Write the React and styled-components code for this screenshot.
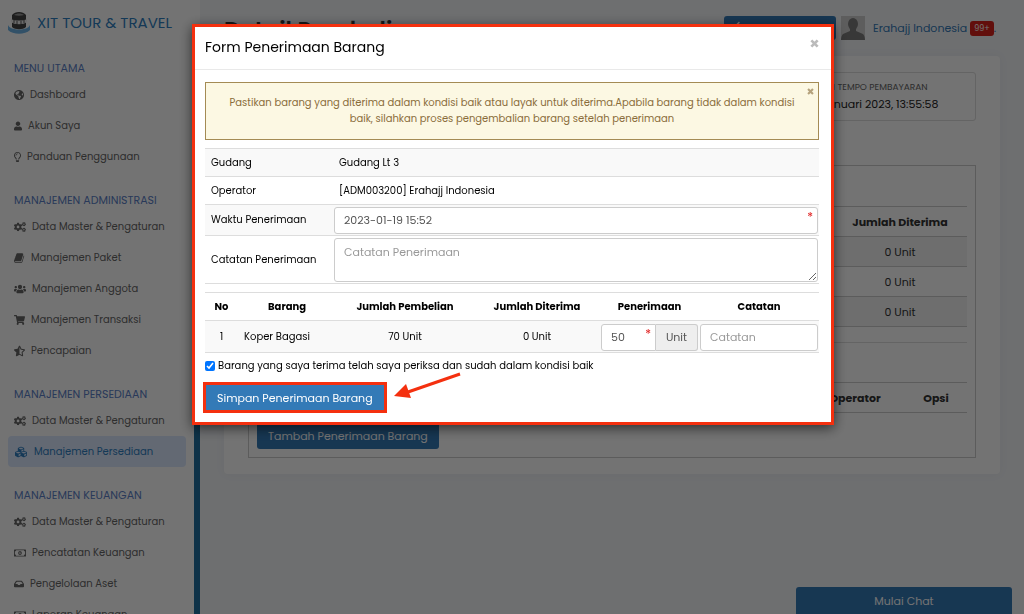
import React, { useState } from "react";
import styled, { createGlobalStyle } from "styled-components";
import {
  FaGlobeAmericas,
  FaUser,
  FaRegLightbulb,
  FaCogs,
  FaUsers,
  FaShoppingCart,
  FaStarHalfAlt,
  FaCubes,
  FaRegMoneyBillAlt,
  FaInbox,
  FaArrowLeft,
} from "react-icons/fa";

function BookIcon() {
  return (
    <svg viewBox="0 0 1792 1792" fill="currentColor" aria-hidden="true">
      <path d="M1639 478q40 57 18 129l-275 906q-19 64-76.5 107.5t-122.5 43.5h-923q-77 0-148.5-53.5t-99.5-131.5q-24-67-2-127 0-4 3-27t4-37q1-8-3-21.5t-3-19.5q2-11 8-21t16.5-23.5 16.5-23.5q23-38 45-91.5t30-91.5q3-10 .5-30t-.5-28q3-11 17-28t17-23q21-36 42-92t25-90q1-9-2.5-32t.5-28q4-13 22-30.5t22-22.5q19-26 42.5-84.5t27.5-96.5q1-8-3-25.5t-2-26.5q2-8 9-18t18-23 17-21q8-12 16.5-30.5t15-35 16-36 19.5-32 26.5-23.5 36-11.5 47.5 5.5l-1 3q38-9 51-9h761q74 0 114 56t18 130l-274 906q-36 119-71.5 153.5t-128.5 34.5h-869q-27 0-38 15-11 16-1 43 24 70 144 70h923q29 0 56-15.5t35-41.5l300-987q7-22 5-57 38 15 59 43z" />
    </svg>
  );
}

function CloseIcon({ size }) {
  return (
    <svg width={size} height={size} viewBox="0 0 10 10" aria-hidden="true">
      <path d="M1.5 1.5l7 7M8.5 1.5l-7 7" stroke="currentColor" strokeWidth="3" />
    </svg>
  );
}

const menu = [
  {
    title: "MENU UTAMA",
    items: [
      { label: "Dashboard", icon: FaGlobeAmericas, width: 10 },
      { label: "Akun Saya", icon: FaUser, width: 8 },
      { label: "Panduan Penggunaan", icon: FaRegLightbulb, width: 7 },
    ],
  },
  {
    title: "MANAJEMEN ADMINISTRASI",
    items: [
      { label: "Data Master & Pengaturan", icon: FaCogs, width: 12 },
      { label: "Manajemen Paket", icon: BookIcon, width: 11 },
      { label: "Manajemen Anggota", icon: FaUsers, width: 12 },
      { label: "Manajemen Transaksi", icon: FaShoppingCart, width: 11 },
      { label: "Pencapaian", icon: FaStarHalfAlt, width: 11 },
    ],
  },
  {
    title: "MANAJEMEN PERSEDIAAN",
    items: [
      { label: "Data Master & Pengaturan", icon: FaCogs, width: 12 },
      { label: "Manajemen Persediaan", icon: FaCubes, width: 14, active: true },
    ],
  },
  {
    title: "MANAJEMEN KEUANGAN",
    items: [
      { label: "Data Master & Pengaturan", icon: FaCogs, width: 12 },
      { label: "Pencatatan Keuangan", icon: FaRegMoneyBillAlt, width: 12 },
      { label: "Pengelolaan Aset", icon: FaInbox, width: 10 },
      { label: "Laporan Keuangan", icon: FaRegMoneyBillAlt, width: 12 },
    ],
  },
];

function Logo() {
  return (
    <svg width="24" height="24" viewBox="0 0 24 24" aria-hidden="true">
      <path d="M0 14v5c5 5 17 5 22 0v-5c-2 6-20 6-22 0z" fill="#6fb4e6" />
      <path d="M4 4c3-4 11-4 14 0v12c-3 3-11 3-14 0z" fill="#444" />
      <path d="M3 8c4 2 12 2 16 0v3c-4 3-12 3-16 0z" fill="#eee" />
      <path d="M6 9v3M9 10v3M13 10v3M16 9v3" stroke="#555" />
      <path d="M6 4c3-2 7-2 10 0-3 1-7 1-10 0z" fill="#999" />
    </svg>
  );
}

function Sidebar() {
  return (
    <SidebarWrapper>
      <SidebarContent>
        <Brand href="#">
          <Logo />
          XIT TOUR &amp; TRAVEL
        </Brand>
        {menu.map((group) => (
          <MenuGroup key={group.title}>
            <MenuTitle>{group.title}</MenuTitle>
            {group.items.map(({ label, icon: Icon, width, active }) => (
              <MenuLink href="#" key={label} $active={active}>
                <MenuIcon $width={width}>
                  <Icon />
                </MenuIcon>
                {label}
              </MenuLink>
            ))}
          </MenuGroup>
        ))}
      </SidebarContent>
      <ScrollTrack>
        <ScrollThumb />
      </ScrollTrack>
    </SidebarWrapper>
  );
}

function DetailPage() {
  return (
    <Main>
      <TopBar>
        <PageTitle>Detail Pembelian</PageTitle>
        <BackButton type="button" aria-label="Kembali">
          <FaArrowLeft />
        </BackButton>
        <Avatar viewBox="0 0 24 24" aria-hidden="true">
          <rect width="24" height="24" fill="#cfcfcf" />
          <ellipse cx="12" cy="8" rx="5" ry="6" fill="#7c7c7c" />
          <path d="M9 11h6v4l7 3c1 1 2 3 2 6H0c0-3 1-5 2-6l7-3z" fill="#7c7c7c" />
        </Avatar>
        <UserLink href="#">Erahajj Indonesia</UserLink>
        <Badge>99+</Badge>
        <Dot>.</Dot>
      </TopBar>

      <Card>
        <InfoRow>
          <InfoBox>
            <InfoLabel>JATUH TEMPO PEMBAYARAN</InfoLabel>
            <InfoValue>19 Januari 2023, 13:55:58</InfoValue>
          </InfoBox>
        </InfoRow>

        <Panel>
          <DetailTable>
            <thead>
              <tr>
                <td />
                <th scope="col">Jumlah Diterima</th>
              </tr>
            </thead>
            <tbody>
              {[0, 0, 0].map((amount, i) => (
                <tr key={i}>
                  <td />
                  <td>{amount} Unit</td>
                </tr>
              ))}
            </tbody>
          </DetailTable>
          <Divider />
          <ReceiptTable>
            <thead>
              <tr>
                <td />
                <th scope="col">Operator</th>
                <th scope="col">Opsi</th>
              </tr>
            </thead>
          </ReceiptTable>
          <PrimaryButton type="button">Tambah Penerimaan Barang</PrimaryButton>
        </Panel>
      </Card>
    </Main>
  );
}

function ReceiveForm() {
  const [checked, setChecked] = useState(true);

  return (
    <Modal role="dialog" aria-labelledby="form-title">
      <ModalHeader>
        <ModalTitle id="form-title">Form Penerimaan Barang</ModalTitle>
        <CloseButton type="button" aria-label="Tutup">
          <CloseIcon size={9} />
        </CloseButton>
      </ModalHeader>

      <ModalBody>
        <Alert>
          Pastikan barang yang diterima dalam kondisi baik atau layak untuk
          diterima.Apabila barang tidak dalam kondisi baik, silahkan proses
          pengembalian barang setelah penerimaan
          <AlertClose type="button" aria-label="Tutup pesan">
            <CloseIcon size={7} />
          </AlertClose>
        </Alert>

        <FormTable>
          <tbody>
            <tr>
              <th scope="row">Gudang</th>
              <td>Gudang Lt 3</td>
            </tr>
            <tr>
              <th scope="row">Operator</th>
              <td>[ADM003200] Erahajj Indonesia</td>
            </tr>
            <tr>
              <th scope="row">
                <label htmlFor="waktu">Waktu Penerimaan</label>
              </th>
              <FieldCell>
                <Field>
                  <Input id="waktu" defaultValue="2023-01-19 15:52" />
                  <Required>*</Required>
                </Field>
              </FieldCell>
            </tr>
            <tr>
              <th scope="row">
                <label htmlFor="catatan">Catatan Penerimaan</label>
              </th>
              <FieldCell>
                <TextArea id="catatan" placeholder="Catatan Penerimaan" />
              </FieldCell>
            </tr>
          </tbody>
        </FormTable>

        <ItemTable>
          <colgroup>
            <Col $width="33px" />
            <Col $width="98px" />
            <Col $width="138px" />
            <Col $width="126px" />
            <Col $width="99px" />
            <Col $width="auto" />
          </colgroup>
          <thead>
            <tr>
              <th scope="col">No</th>
              <th scope="col">Barang</th>
              <th scope="col">Jumlah Pembelian</th>
              <th scope="col">Jumlah Diterima</th>
              <th scope="col">Penerimaan</th>
              <th scope="col">Catatan</th>
            </tr>
          </thead>
          <tbody>
            <tr>
              <td>1</td>
              <NameCell>Koper Bagasi</NameCell>
              <td>70 Unit</td>
              <td>0 Unit</td>
              <FieldCell>
                <InputGroup>
                  <Field>
                    <Input aria-label="Penerimaan" defaultValue="50" />
                    <Required>*</Required>
                  </Field>
                  <Addon>Unit</Addon>
                </InputGroup>
              </FieldCell>
              <FieldCell>
                <Input aria-label="Catatan" placeholder="Catatan" />
              </FieldCell>
            </tr>
          </tbody>
        </ItemTable>

        <CheckLabel>
          <Checkbox
            type="checkbox"
            checked={checked}
            onChange={(e) => setChecked(e.target.checked)}
          />
          Barang yang saya terima telah saya periksa dan sudah dalam kondisi
          baik
        </CheckLabel>

        <SubmitRow>
          <SubmitButton type="submit">Simpan Penerimaan Barang</SubmitButton>
          <Arrow width="70" height="28" viewBox="0 0 70 28" aria-hidden="true">
            <path d="M66 2L14 20" stroke="#f4300f" strokeWidth="3" />
            <path d="M0 24L12 12l5 14z" fill="#f4300f" />
          </Arrow>
        </SubmitRow>
      </ModalBody>
    </Modal>
  );
}

function App() {
  return (
    <>
      <GlobalStyle />
      <Layout>
        <Sidebar />
        <DetailPage />
      </Layout>
      <ChatButton type="button">Mulai Chat</ChatButton>
      <Backdrop>
        <ReceiveForm />
      </Backdrop>
    </>
  );
}

const GlobalStyle = createGlobalStyle`
  * {
    box-sizing: border-box;
  }
  body {
    margin: 0;
    overflow: hidden;
    background: #f3f5f9;
    color: #000;
    font: 10px/16px Poppins, Inter, "Open Sans", sans-serif;
  }
  button, input, textarea {
    font: inherit;
    margin: 0;
  }
  a {
    text-decoration: none;
  }
  table {
    width: 100%;
    border-collapse: collapse;
  }
`;

const Layout = styled.div`
  display: flex;
  height: 100vh;
`;

const SidebarWrapper = styled.nav`
  display: flex;
  flex: none;
  width: 200px;
  background: #fff;
  overflow: hidden;
`;

const SidebarContent = styled.div`
  flex: 1;
  padding: 11px 8px 0;
`;

const Brand = styled.a`
  display: flex;
  align-items: center;
  gap: 5px;
  height: 24px;
  margin-bottom: 23px;
  font-size: 15px;
  white-space: nowrap;
  color: #2f7fc1;
`;

const MenuGroup = styled.div`
  margin-bottom: 18px;
`;

const MenuTitle = styled.div`
  height: 21px;
  padding: 0 6px;
  font-size: 11px;
  line-height: 21px;
  white-space: nowrap;
  color: #5b7fc7;
`;

const MenuLink = styled.a`
  display: flex;
  align-items: center;
  gap: 6px;
  height: 31px;
  padding: 0 6px;
  border-radius: 4px;
  white-space: nowrap;
  color: ${(props) => (props.$active ? "#2f7fc1" : "#666")};
  background: ${(props) => (props.$active ? "#dbe8ff" : "none")};
`;

const MenuIcon = styled.span`
  display: flex;
  width: ${(props) => props.$width}px;

  svg {
    width: 100%;
    height: 12px;
  }
`;

const ScrollTrack = styled.div`
  display: flex;
  align-items: flex-end;
  width: 6px;
`;

const ScrollThumb = styled.div`
  width: 100%;
  height: 80%;
  background: #1f6f9f;
`;

const Main = styled.main`
  flex: 1;
  padding: 16px 24px;
`;

const TopBar = styled.header`
  display: flex;
  align-items: center;
  height: 24px;
  margin-bottom: 16px;
`;

const PageTitle = styled.h1`
  flex: 1;
  margin: 0;
  padding-top: 4px;
  font-size: 23px;
  font-weight: 600;
  line-height: 24px;
  color: #333;
`;

const BackButton = styled.button`
  width: 112px;
  height: 24px;
  margin-right: 5px;
  padding: 0 10px;
  border: 0;
  border-radius: 3px;
  text-align: left;
  color: #fff;
  background: #337ab7;
`;

const Avatar = styled.svg`
  width: 24px;
  height: 24px;
  margin-right: 8px;
`;

const UserLink = styled.a`
  margin-right: 3px;
  font-size: 11px;
  color: #337ab7;
`;

const Badge = styled.span`
  padding: 0 4px;
  border-radius: 3px;
  font-size: 8px;
  line-height: 15px;
  color: #fff;
  background: #d9231c;
`;

const Dot = styled.span`
  margin-right: 4px;
  font-size: 11px;
  color: #337ab7;
`;

const Card = styled.section`
  padding: 16px 24px;
  border-radius: 4px;
  background: #fff;
  box-shadow: 0 0 12px rgba(0, 0, 0, 0.04);
`;

const InfoRow = styled.div`
  display: flex;
  justify-content: flex-end;
  margin-bottom: 44px;
`;

const InfoBox = styled.div`
  width: 184px;
  padding: 6px 14px;
  border: 1px solid #ddd;
  border-radius: 3px;
`;

const InfoLabel = styled.div`
  font-size: 9px;
  color: #666;
`;

const InfoValue = styled.div`
  font-size: 11px;
  line-height: 19px;
  color: #222;
`;

const Panel = styled.div`
  padding: 40px 8px 8px;
  border: 1px solid #ccc;
`;

const DetailTable = styled.table`
  font-size: 11px;
  color: #333;

  tr {
    height: 30px;
    border-top: 1px solid #ccc;
    border-bottom: 1px solid #ccc;
  }
  tbody tr:nth-child(odd) {
    background: #f4f4f4;
  }
  th,
  td {
    padding: 0;
    text-align: center;
  }
  th {
    width: 134px;
  }
`;

const ReceiptTable = styled(DetailTable)`
  margin-bottom: 9px;

  th {
    width: 62px;
  }
  th:nth-child(2) {
    width: 100px;
  }
`;

const Divider = styled.hr`
  margin: 15px 0 39px;
  border: 0;
  border-top: 1px solid #ddd;
`;

const PrimaryButton = styled.button`
  height: 27px;
  padding: 0 11px;
  border: 0;
  border-radius: 3px;
  font-size: 11px;
  color: #fff;
  background: #337ab7;
`;

const ChatButton = styled.button`
  position: fixed;
  right: 12px;
  bottom: 0;
  width: 216px;
  height: 27px;
  border: 0;
  border-radius: 3px 3px 0 0;
  font-size: 11px;
  color: #fff;
  background: #337ab7;
`;

const Backdrop = styled.div`
  position: fixed;
  inset: 0;
  display: flex;
  justify-content: center;
  align-items: flex-start;
  padding: 24px 16px 24px 18px;
  background: rgba(0, 0, 0, 0.55);
`;

const Modal = styled.form`
  width: 100%;
  max-width: 642px;
  border: 3px solid #f4300f;
  background: #fff;
  box-shadow: 0 3px 12px rgba(0, 0, 0, 0.6);
`;

const ModalHeader = styled.div`
  display: flex;
  justify-content: space-between;
  padding: 10px 12px 12px 10px;
  border-bottom: 1px solid #e9e9e9;
`;

const ModalTitle = styled.h2`
  margin: 0;
  font-size: 14px;
  font-weight: 400;
  line-height: 20px;
`;

const CloseButton = styled.button`
  display: flex;
  height: 12px;
  padding: 2px 0;
  border: 0;
  color: #bbb;
  background: none;
`;

const ModalBody = styled.div`
  padding: 12px 12px 11px 10px;
`;

const Alert = styled.div`
  position: relative;
  margin-bottom: 8px;
  padding: 12px 16px;
  border: 1px solid #a48b54;
  text-align: center;
  color: #8a6d3b;
  background: #fcf8e3;
`;

const AlertClose = styled.button`
  position: absolute;
  top: 5px;
  right: 4px;
  display: flex;
  padding: 0;
  border: 0;
  color: #b5a27c;
  background: none;
`;

const FormTable = styled.table`
  margin-bottom: 8px;

  tr {
    height: 28px;
    border-top: 1px solid #ddd;
    border-bottom: 1px solid #ddd;
  }
  tr:nth-child(odd) {
    background: #f9f9f9;
  }
  th,
  td {
    padding: 0 6px;
    font-weight: 400;
    text-align: left;
  }
  th {
    width: 128px;
  }
`;

const FieldCell = styled.td`
  && {
    padding: 2px 1px 1px;
  }
`;

const Field = styled.div`
  position: relative;
  flex: 1;
`;

const Input = styled.input`
  display: block;
  width: 100%;
  height: 27px;
  padding: 0 9px;
  border: 1px solid #ccc;
  border-radius: 3px;
  font-size: 11px;
  color: #555;
  background: #fff;

  &::placeholder {
    color: #999;
  }
`;

const TextArea = styled.textarea`
  display: block;
  width: 100%;
  height: 44px;
  padding: 5px 9px;
  border: 1px solid #ccc;
  border-radius: 3px;
  font-size: 11px;
  resize: vertical;

  &::placeholder {
    color: #999;
  }
`;

const Required = styled.span`
  position: absolute;
  top: 4px;
  right: 5px;
  font-size: 12px;
  line-height: 12px;
  color: #e02020;
`;

const Col = styled.col`
  width: ${(props) => props.$width};
`;

const ItemTable = styled.table`
  table-layout: fixed;
  margin-bottom: 5px;

  tr {
    height: 28px;
    border-top: 1px solid #ddd;
    border-bottom: 1px solid #ddd;
  }
  tbody tr {
    height: 32px;
    background: #f9f9f9;
  }
  th,
  td {
    padding: 0;
    text-align: center;
  }
`;

const NameCell = styled.td`
  && {
    padding: 0 6px;
    text-align: left;
  }
`;

const InputGroup = styled.div`
  display: flex;

  input {
    border-radius: 3px 0 0 3px;
  }
`;

const Addon = styled.span`
  width: 42px;
  border: 1px solid #ccc;
  border-left: 0;
  border-radius: 0 3px 3px 0;
  font-size: 11px;
  line-height: 25px;
  color: #555;
  background: #eee;
`;

const CheckLabel = styled.label`
  display: flex;
  align-items: center;
  gap: 3px;
`;

const Checkbox = styled.input`
  width: 10px;
  height: 10px;
  margin: 0;
`;

const SubmitRow = styled.div`
  display: flex;
  margin-top: 10px;
`;

const SubmitButton = styled.button`
  height: 27px;
  padding: 0 12px;
  border: 0;
  outline: 3px solid #f4300f;
  outline-offset: -1px;
  font-size: 11px;
  color: #fff;
  background: #337ab7;
`;

/* points at the submit button from the right */
const Arrow = styled.svg`
  margin: -12px 0 0 9px;
`;

export default App;
